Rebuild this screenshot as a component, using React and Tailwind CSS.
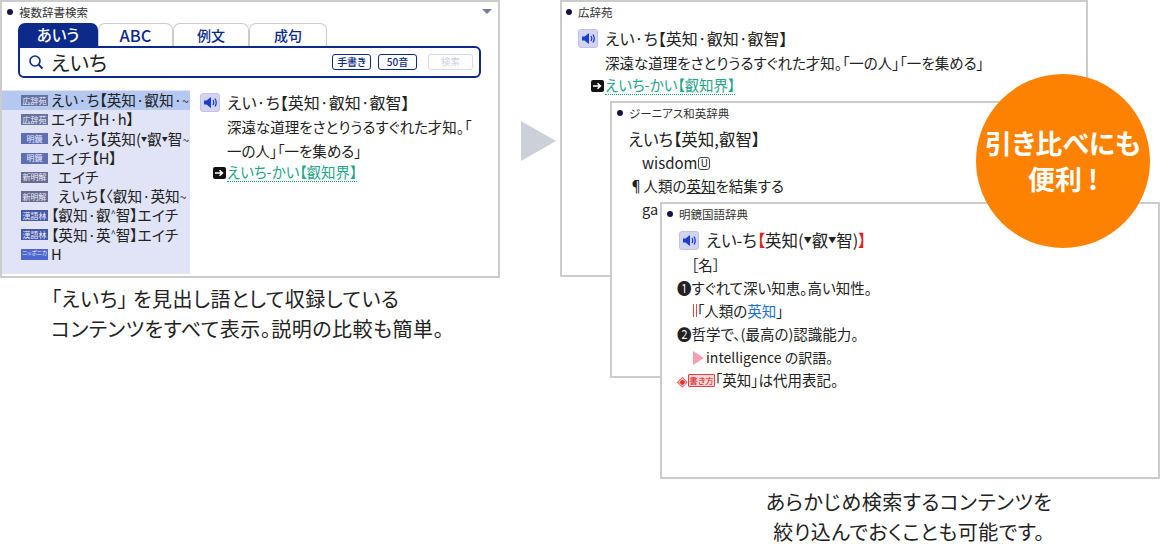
function Speaker() {
  return (
    <span className="flex h-[19px] w-[20px] shrink-0 items-center justify-center rounded-[3px] border border-[#c0c2e6] bg-[#d2d4f2]">
      <svg width="15" height="13" viewBox="0 0 15 13">
        <path d="M1 4.500h2.500L8 1v11L3.500 8.500H1z" fill="#1a3cd0" />
        <path d="M10 4q1.500 2.500 0 5M12 2.500q2.500 4 0 8" fill="none" stroke="#1a3cd0" strokeWidth="1.300" />
      </svg>
    </span>
  );
}

function Arrow() {
  return (
    <span className="mr-px inline-flex h-[12px] w-[13px] shrink-0 items-center justify-center rounded-[2px] bg-[#111]">
      <svg width="11" height="8" viewBox="0 0 11 8">
        <path d="M1 4h7M5.500 1.200 8.500 4l-3 2.800" fill="none" stroke="#fff" strokeWidth="1.500" />
      </svg>
    </span>
  );
}

function Title({ children }) {
  return (
    <div className="flex items-center text-[11.500px] leading-[14px] text-[#333]">
      <span className="mr-[6px] h-[6px] w-[6px] rounded-full bg-[#14144a]" />
      {children}
    </div>
  );
}

function Mark() {
  return <span className="relative top-[-4px] text-[8px] leading-none">▼</span>;
}

function SmallMark() {
  return <span className="relative top-[-4px] text-[6px] leading-none">▼</span>;
}

function Hat() {
  return <span className="relative top-[-4px] text-[9px] leading-none">^</span>;
}

const rows = [
  ["広辞苑", <>えい·ち【英知·叡知·<span className="text-[12px]">~</span></>, true, "bg-[#67739f]", ""],
  ["広辞苑", "エイチ【H·h】", false, "bg-[#67739f]", ""],
  ["明鏡", <>えい·ち【英知(<SmallMark />叡<SmallMark />智<span className="text-[12px]">~</span></>, false, "bg-[#5d6fb0]", ""],
  ["明鏡", "エイチ【H】", false, "bg-[#5d6fb0]", ""],
  ["新明解", "エイチ", false, "bg-[#6a6a8f]", "ml-[7px]"],
  ["新明解", <>えいち【〈叡知·英知<span className="text-[12px]">~</span></>, false, "bg-[#6a6a8f]", "ml-[7px]"],
  ["漢語林", <>【叡知·叡<Hat />智】エイチ</>, false, "bg-[#4458a8]", ""],
  ["漢語林", <>【英知·英<Hat />智】エイチ</>, false, "bg-[#4458a8]", ""],
  ["ニッポニカ", "H", false, "bg-[#4f66cc]", ""],
];

function Tab({ label, active, w, size }) {
  return (
    <div
      className={`flex h-[23px] items-center justify-center rounded-t-[7px] font-medium leading-none ${size} ${w} ${
        active ? "bg-[#0b2a8a] text-white" : "border border-b-0 border-[#ccc] bg-white text-[#0b2a8a]"
      }`}
    >
      {label}
    </div>
  );
}

function Chip({ children, w }) {
  return (
    <span className={`flex h-[16px] items-center justify-center rounded-[3px] border border-[#0b2a8a] text-[10px] font-medium leading-none text-[#0b2a8a] ${w}`}>
      {children}
    </span>
  );
}

function LeftPanel() {
  return (
    <div className="h-[278px] w-[500px] border-2 border-[#cccccc] bg-white">
      <div className="relative px-[5px] pt-[3px]">
        <Title>複数辞書検索</Title>
        <span className="absolute right-[6px] top-[7px] h-0 w-0 border-x-[5px] border-t-[5px] border-x-transparent border-t-[#777da0]" />
      </div>
      <div className="mx-[16px] mt-[4px] w-[463px]">
        <div className="flex">
          <Tab label="あいう" active w="w-[80px]" size="text-[15.500px]" />
          <Tab label="ABC" w="w-[75px]" size="text-[16.500px]" />
          <Tab label="例文" w="w-[76px]" size="text-[14px]" />
          <Tab label="成句" w="w-[78px]" size="text-[14px]" />
        </div>
        <div className="flex h-[32px] items-center rounded-b-[6px] rounded-tr-[6px] border-[2.500px] border-[#0b2a8a] pl-[8px] pr-[6px]">
          <svg width="16" height="16" viewBox="0 0 16 16" className="mr-[7px]">
            <circle cx="7" cy="7" r="5" fill="none" stroke="#0b2a8a" strokeWidth="1.600" />
            <path d="M10.500 10.500 14.500 14.500" stroke="#0b2a8a" strokeWidth="1.800" />
          </svg>
          <span className="flex-1 text-[20.500px] leading-none text-[#222]">えいち</span>
          <div className="flex items-center gap-[7px]">
            <Chip w="w-[39px]">手書き</Chip>
            <Chip w="w-[39px]">50音</Chip>
            <span className="ml-[4px] flex h-[16px] w-[45px] items-center justify-center rounded-[3px] border border-[#d5d9ec] text-[9.500px] leading-none text-[#ccd0e4]">検索</span>
          </div>
        </div>
      </div>
      <div className="mt-[12px] flex">
        <div className="h-[184px] w-[188px] bg-[#e0e4f6] pt-px">
          {rows.map(([tag, text, sel, color, gap], i) => (
            <div key={i} className={`flex h-[19.200px] items-center whitespace-nowrap pl-[19px] text-[14.700px] leading-none text-[#222] ${sel ? "bg-[#b4c8f0]" : ""}`}>
              <span className={`mr-[3px] flex h-[11px] w-[27px] shrink-0 items-center justify-center whitespace-nowrap leading-none text-[#eef] ${tag.length > 3 ? "text-[5.500px]" : "text-[8px]"} ${color}`}>{tag}</span>
              <span className={gap}>{text}</span>
            </div>
          ))}
        </div>
        <div className="pl-[10px] pt-[2px]">
          <div className="flex h-[20px] items-center">
            <Speaker />
            <span className="ml-[7px] text-[16px] leading-none text-[#222]">えい·ち【英知·叡知·叡智】</span>
          </div>
          <p className="ml-[27px] mt-[3px] w-[262px] text-[14.500px] leading-[24px] text-[#222]">
            深遠な道理をさとりうるすぐれた才知。「
            <br />
            一の人」「一を集める」
          </p>
          <div className="ml-[13px] flex items-center text-[14.500px] leading-[22px] text-[#1fa58a]">
            <Arrow />
            <span className="border-b border-dotted border-[#1fa58a] leading-[18px]">えいち-かい【叡知界】</span>
          </div>
        </div>
      </div>
    </div>
  );
}

function Caption({ children, className = "" }) {
  return <p className={`text-[20px] leading-[30px] tracking-[0.500px] text-[#222] ${className}`}>{children}</p>;
}

function Windows() {
  return (
    <div className="relative h-[560px] flex-1">
      <div className="absolute left-[0px] top-0 h-[277px] w-[528px] border-2 border-[#ccc] bg-white px-[4px] pt-[3px]">
        <Title>広辞苑</Title>
        <div className="ml-[12px] mt-[9px] flex h-[20px] items-center">
          <Speaker />
          <span className="ml-[7px] text-[16px] leading-none text-[#222]">えい·ち【英知·叡知·叡智】</span>
        </div>
        <p className="ml-[39px] mt-[5px] text-[14.500px] leading-[20px] text-[#222]">深遠な道理をさとりうるすぐれた才知。「一の人」「一を集める」</p>
        <div className="ml-[25px] mt-[3px] flex items-center text-[14.500px] leading-[20px] text-[#1fa58a]">
          <Arrow />
          <span className="border-b border-dotted border-[#1fa58a] leading-[18px]">えいち-かい【叡知界】</span>
        </div>
      </div>

      <div className="absolute left-[50px] top-[101px] h-[277px] w-[470px] border-2 border-[#ccc] bg-white pl-[5px] pt-[3px]">
        <Title>ジーニアス和英辞典</Title>
        <div className="ml-[11px] mt-[9px] text-[16.500px] leading-[20px] text-[#222]">えいち【英知,叡智】</div>
        <div className="ml-[25px] mt-[4px] flex items-center text-[15px] leading-[20px] text-[#222]">
          wisdom
          <span className="ml-px flex h-[13px] w-[12px] items-center justify-center rounded-[3px] border border-[#444] text-[10px] leading-none">U</span>
        </div>
        <div className="ml-[12px] mt-[3px] text-[14.500px] leading-[20px] text-[#222]">
          ¶人類の<span className="underline">英知</span>を結集する
        </div>
        <div className="ml-[25px] mt-[3px] text-[14.500px] leading-[20px] text-[#222]">ga</div>
      </div>

      <div className="absolute left-[100px] top-[202px] h-[277px] w-[500px] border-2 border-[#ccc] bg-white pl-[5px] pt-[3px]">
        <Title>明鏡国語辞典</Title>
        <div className="ml-[12px] mt-[9px] flex h-[20px] items-center text-[16.500px] leading-none text-[#222]">
          <Speaker />
          <span className="ml-[7px]">えい-ち</span>
          <span className="text-[#e02020]">【</span>
          <span>英知(<Mark />叡<Mark />智)</span>
          <span className="text-[#e02020]">】</span>
        </div>
        <div className="ml-[24px] mt-[3px] text-[14.500px] leading-[23px] text-[#222]">［名］</div>
        <div className="ml-[10px] text-[14.500px] leading-[23px] text-[#222]">❶すぐれて深い知恵。高い知性。</div>
        <div className="ml-[26px] flex items-center text-[14.500px] leading-[23px] text-[#222]">
          <span className="h-[13px] w-[4px] shrink-0 border-x border-[#e84848]" />
          <span>「人類の<span className="text-[#1a6fe0]">英知</span>」</span>
        </div>
        <div className="ml-[10px] text-[14.500px] leading-[23px] text-[#222]">❷哲学で、(最高の)認識能力。</div>
        <div className="ml-[26px] mt-px flex items-center text-[14px] leading-[23px] text-[#222]">
          <span className="mr-[2px] h-0 w-0 border-y-[7px] border-l-[11px] border-y-transparent border-l-[#f4a0b0]" />
          intelligence の訳語。
        </div>
        <div className="ml-[10px] flex items-center text-[14.500px] leading-[22px] text-[#222]">
          <span className="text-[14px] leading-none text-[#e03030]">◈</span>
          <span className="flex h-[13px] w-[27px] shrink-0 items-center justify-center whitespace-nowrap rounded-[1px] border border-[#e84040] bg-[#fbd5d5] text-[8.500px] leading-none text-[#d02020]">書き方</span>
          「英知」は代用表記。
        </div>
      </div>

      <div className="absolute left-[416px] top-[74px] flex h-[174px] w-[174px] items-center justify-center rounded-full bg-[#fe8201] text-center text-[27px] font-bold leading-[36px] text-white">
        <div>
          引き比べにも
          <br />
          便利 !
        </div>
      </div>

      <div className="absolute left-[100px] top-[487px] w-[498px] text-center">
        <Caption>
          あらかじめ検索するコンテンツを
          <br />
          絞り込んでおくことも可能です。
        </Caption>
      </div>
    </div>
  );
}

export default function App() {
  return (
    <div className="flex h-[560px] w-[1160px] overflow-hidden bg-white [font-family:'Noto_Sans_CJK_JP','Noto_Sans',sans-serif] [font-feature-settings:'palt']">
      <div className="w-[500px] shrink-0">
        <LeftPanel />
        <Caption className="mt-[6px] pl-[51px]">
          「えいち」 を見出し語として収録している
          <br />
          コンテンツをすべて表示。説明の比較も簡単。
        </Caption>
      </div>
      <div className="flex w-[60px] shrink-0 items-start justify-center pl-[16px] pt-[121px]">
        <span className="h-0 w-0 border-y-[20px] border-l-[35px] border-y-transparent border-l-[#ccd0d8]" />
      </div>
      <Windows />
    </div>
  );
}
